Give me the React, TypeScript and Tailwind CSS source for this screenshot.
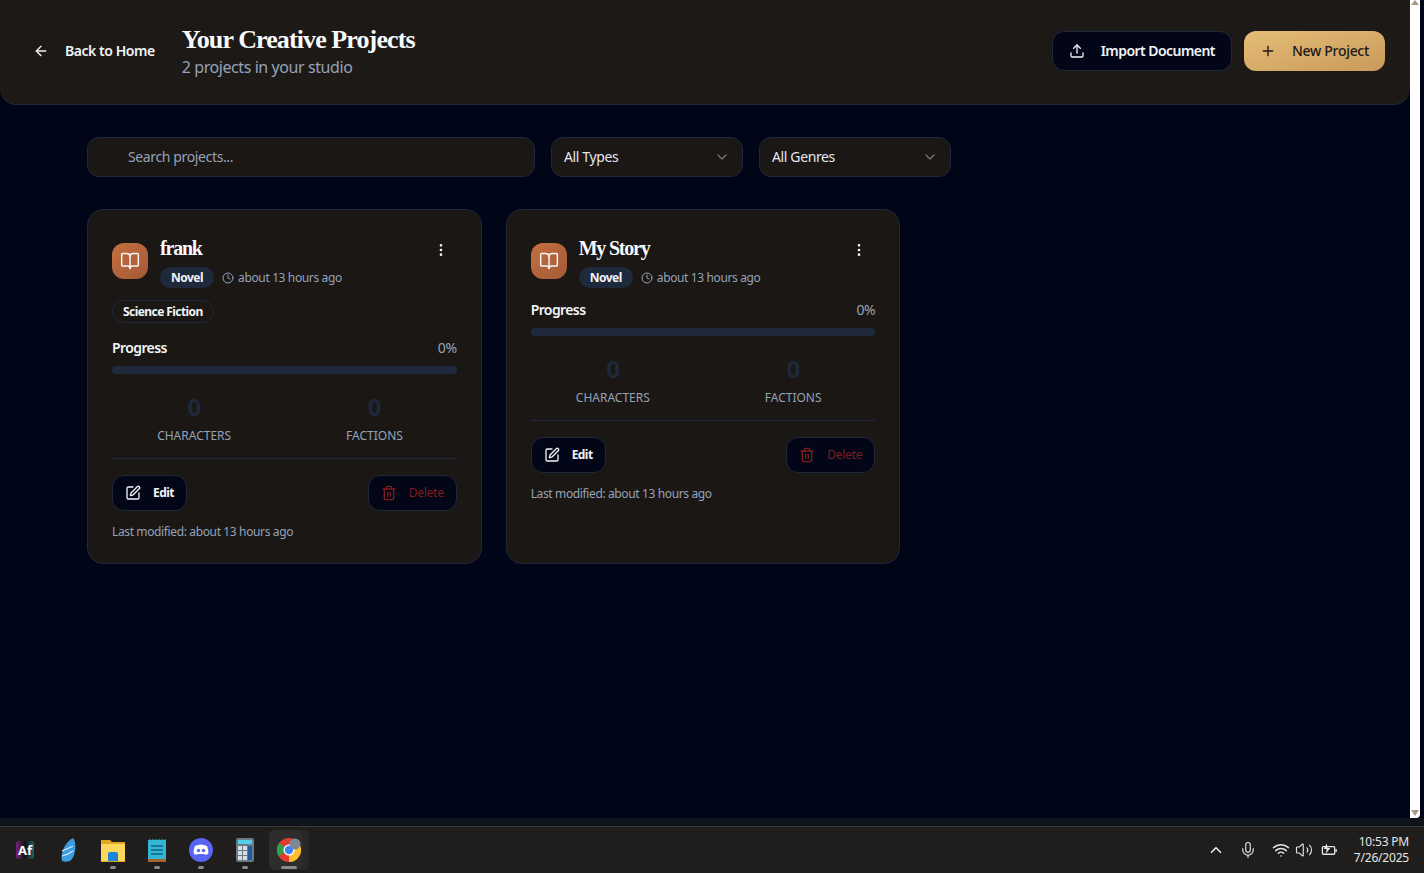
import { ArrowLeft, BookOpen, ChevronDown, ChevronUp, Clock, EllipsisVertical, Mic, Plus, SquarePen, Trash2, Upload, Volume2, Wifi } from "lucide-react";

const sans = "font-['Noto_Sans',sans-serif]";
const serif = "font-['Liberation_Serif',serif]";

const ProjectCard = ({ title, genre }: { title: string; genre?: string }) => (
  <div className="rounded-2xl border border-[#1e293b] bg-[#1b1714] px-6 pt-6 pb-[23px]">
    <div className="flex items-center justify-between">
      <div className="flex items-center gap-3">
        <div className="flex h-9 w-9 items-center justify-center rounded-xl bg-gradient-to-br from-[#c56f3f] to-[#a35a37]">
          <BookOpen className="h-5 w-5 text-[#f5f5f4]" strokeWidth={1.75} />
        </div>
        <div>
          <div className={`${serif} h-7 text-xl leading-7 font-bold tracking-[-1.2px] text-[#f8fafc]`}>{title}</div>
          <div className="mt-[5px] flex items-center gap-2">
            <span className="rounded-full bg-[#1e293b] px-[11px] py-[2px] text-xs leading-[17px] font-bold tracking-[-0.5px] text-[#f1f5f9]">Novel</span>
            <span className="flex items-center gap-1 text-xs text-[#94a3b8]">
              <Clock className="h-3 w-3" />
              about 13 hours ago
            </span>
          </div>
        </div>
      </div>
      <EllipsisVertical className="mr-2 mb-[22px] h-4 w-4 text-[#f1f5f9]" />
    </div>
    {genre && (
      <div className="mt-3 flex pb-[3px]">
        <span className="rounded-full border border-[#1e293b] px-[10px] py-[2px] text-xs leading-[17px] font-bold tracking-[-0.57px] text-[#f1f5f9]">{genre}</span>
      </div>
    )}
    <div className="mt-3 flex items-center justify-between text-sm leading-5">
      <span className="font-semibold tracking-[-0.6px] text-[#f1f5f9]">Progress</span>
      <span className="text-[#94a3b8]">0%</span>
    </div>
    <div className="mt-2 h-2 rounded-full bg-[#1e293b]" />
    <div className="mt-[17px] grid grid-cols-2 gap-4 border-b border-[#1e293b] pb-[14px] text-center">
      {["CHARACTERS", "FACTIONS"].map((label) => (
        <div key={label}>
          <div className="text-2xl leading-8 font-bold text-[#1e293b]">0</div>
          <div className="mt-[5px] text-xs leading-4 tracking-normal text-[#94a3b8]">{label}</div>
        </div>
      ))}
    </div>
    <div className="mt-4 flex justify-between">
      <button className="flex h-9 items-center gap-3 rounded-xl border border-[#1e293b] bg-[#020617] px-3 text-xs font-bold tracking-[-0.55px] text-[#f1f5f9]">
        <SquarePen className="h-4 w-4" />
        Edit
      </button>
      <button className="flex h-9 items-center gap-3 rounded-xl border border-[#1e293b] bg-[#020617] px-3 text-xs tracking-[-0.25px] text-[#7f1d1d]">
        <Trash2 className="h-4 w-4" />
        Delete
      </button>
    </div>
    <div className="mt-[13px] text-xs leading-4 text-[#94a3b8]">Last modified: about 13 hours ago</div>
  </div>
);

const Select = ({ label }: { label: string }) => (
  <div className="flex h-10 w-48 items-center justify-between rounded-xl border border-[#1e293b] bg-[#1b1714] px-3 text-sm text-[#e2e8f0]">
    {label}
    <ChevronDown className="h-4 w-4 text-[#78716c]" />
  </div>
);

const TaskIcon = ({ children, open, wide }: { children: React.ReactNode; open?: boolean; wide?: boolean }) => (
  <div className={`flex h-10 flex-col items-center pt-2 ${wide ? "ml-[2px] w-10 rounded-md bg-[#2d2d2d] shadow-[inset_-6px_0_0_#272727]" : "w-11"}`}>
    <div className="flex h-6 w-6 items-center justify-center">{children}</div>
    <div className="mt-1 flex h-[3px]">{open && <span className={`h-[3px] rounded-full bg-[#8a8a8a] ${wide ? "w-4" : "w-[6px]"}`} />}</div>
  </div>
);

export default function App() {
  return (
    <div className={`${sans} flex h-screen flex-col overflow-hidden bg-[#000617] tracking-[-0.37px]`}>
      <div className="flex min-h-0 flex-1">
        <main className="min-w-0 flex-1">
          <header className="flex h-[105px] items-center justify-between rounded-b-2xl border-b border-[#1e293b] bg-[#1d1916] pr-[25px] pb-[2px] pl-[33px]">
            <div className="flex items-center gap-[27px]">
              <div className="flex items-center gap-[16px] text-sm font-semibold tracking-[-0.45px] text-[#f1f5f9]">
                <ArrowLeft className="h-4 w-4" />
                Back to Home
              </div>
              <div>
                <h1 className={`${serif} mt-px text-[26px] leading-8 font-bold tracking-[-0.9px] text-[#f8fafc]`}>Your Creative Projects</h1>
                <p className="-mt-px text-base leading-6 tracking-[-0.42px] text-[#94a3b8]">2 projects in your studio</p>
              </div>
            </div>
            <div className="flex items-center gap-3">
              <button className="flex h-10 items-center gap-4 rounded-xl border border-[#1e293b] bg-[#020617] px-4 text-sm font-semibold tracking-[-0.55px] text-[#f1f5f9]">
                <Upload className="h-4 w-4" />
                Import Document
              </button>
              <button className="flex h-10 items-center gap-4 rounded-xl bg-gradient-to-br from-[#e5bd76] to-[#c99a5b] px-4 text-sm font-medium tracking-[-0.3px] text-[#1c1917]">
                <Plus className="h-4 w-4" />
                New Project
              </button>
            </div>
          </header>
          <div className="mt-8 ml-[87px] w-[1232px]">
            <div className="flex gap-4">
              <div className="flex h-10 w-[448px] items-center rounded-xl border border-[#1e293b] bg-[#1b1714] pl-10 text-sm text-[#94a3b8]">Search projects...</div>
              <Select label="All Types" />
              <Select label="All Genres" />
            </div>
            <div className="mt-8 grid grid-cols-3 gap-6">
              <ProjectCard title="frank" genre="Science Fiction" />
              <ProjectCard title="My Story" />
            </div>
          </div>
        </main>
        <div className="mr-1 flex w-[10px] flex-col items-center justify-between rounded-br-sm bg-white pb-[2px]">
          <svg viewBox="0 0 8 5" className="h-[5px] w-2">
            <path d="M4 0 8 5H0z" fill="#a39a86" />
          </svg>
          <svg viewBox="0 0 8 6" className="h-[6px] w-2">
            <path d="M0 0h8L4 6z" fill="#a39a86" />
          </svg>
        </div>
      </div>
      <div className="h-2 bg-[#0f131b]" />
      <footer className="flex h-[47px] items-center justify-between border-t border-[#3a3a3a] bg-[#1f1e1c] pr-[15px] pl-[3px]">
        <div className="flex items-center">
          <TaskIcon>
            <div className="flex h-[18px] w-[18px] items-center justify-center rounded-[3px] bg-gradient-to-r from-[#7a1f7a] via-[#111111] to-[#0e6a75] text-[13px] leading-none font-bold tracking-normal text-white">Af</div>
          </TaskIcon>
          <TaskIcon>
            <svg viewBox="0 0 24 24" className="h-6 w-6">
              <path d="M16 0c4 4 3 19-3 23-3 1-6 1-8 0C3 15 8 4 16 0z" fill="#3d9be0" />
              <path d="M5 13c3-1 7-3 11-5M5 18c4-1 8-3 11-5" stroke="#d5ecfa" strokeWidth="1.2" fill="none" />
            </svg>
          </TaskIcon>
          <TaskIcon open>
            <svg viewBox="0 0 24 24" className="h-6 w-6">
              <path d="M0 2h9l2 2h13v20H0z" fill="#e0a91f" />
              <path d="M0 6h24v17H0z" fill="#fbd75b" />
              <path d="M7 16q0-2 2-2h6q2 0 2 2v7H7z" fill="#1a86d8" />
            </svg>
          </TaskIcon>
          <TaskIcon open>
            <svg viewBox="0 0 24 24" className="h-6 w-6">
              <path d="M3 2h18v22H3z" fill="#33b6d6" />
              <path d="M3 21h18v3H3z" fill="#a5622b" />
              <path d="M5 1v3M8 1v3M11 1v3M14 1v3M17 1v3M20 1v3" stroke="#33b6d6" />
              <path d="M6 8h12M6 12h12M6 16h12" stroke="#12627f" strokeWidth="1.6" />
            </svg>
          </TaskIcon>
          <TaskIcon open>
            <svg viewBox="0 0 24 24" className="h-6 w-6">
              <circle cx="12" cy="12" r="12" fill="#5865f2" />
              <path d="M6 8c4-2 8-2 12 0 1 3 2 6 1 8-2 1-3 1-4 0H9c-1 1-2 1-4 0-1-2 0-5 1-8z" fill="#fff" />
              <circle cx="9.5" cy="12.5" r="1.7" fill="#5865f2" />
              <circle cx="14.5" cy="12.5" r="1.7" fill="#5865f2" />
            </svg>
          </TaskIcon>
          <TaskIcon open>
            <svg viewBox="0 0 24 24" className="h-6 w-6">
              <rect x="3" width="18" height="24" rx="2" fill="#6b7a88" />
              <rect x="5" y="2" width="14" height="4" fill="#4fd0ea" />
              <path d="M5 8h4v4H5zM10 8h4v4h-4zM5 13h4v4H5zM10 13h4v4h-4zM5 18h4v4H5zM10 18h4v4h-4z" fill="#d7dde2" />
              <path d="M15 8h4v14h-4z" fill="#1f5b9c" />
            </svg>
          </TaskIcon>
          <TaskIcon open wide>
            <svg viewBox="0 0 24 24" className="h-6 w-6">
              <circle cx="12" cy="12" r="12" fill="#e33b2e" />
              <path d="M12 12 1.6 18A12 12 0 0 1 2 5z" fill="#2fa04a" />
              <path d="M12 24a12 12 0 0 0 10.4-18H12z" fill="#fbc02d" />
              <circle cx="12" cy="12" r="5.5" fill="#fff" />
              <circle cx="12" cy="12" r="4.2" fill="#3b82f6" />
              <circle cx="18" cy="6" r="5.5" fill="#7d8a96" />
            </svg>
          </TaskIcon>
        </div>
        <div className="flex items-center text-[#e5e5e5]">
          <ChevronUp className="mr-[14px] h-[18px] w-[18px]" strokeWidth={2.25} />
          <Mic className="mr-[15px] h-[18px] w-[18px]" strokeWidth={1.5} />
          <Wifi className="mr-[5px] h-[18px] w-[18px]" />
          <Volume2 className="mr-[8px] h-[18px] w-[18px]" strokeWidth={1.5} />
          <svg viewBox="0 0 18 14" className="mr-[16px] h-[14px] w-[17px]" fill="none" stroke="currentColor" strokeWidth="1.4">
            <rect x="1.5" y="3.5" width="13" height="8" rx="1" />
            <path d="M16 6v3" />
            <path d="M6 0 3 6h3l-1 5 5-6H7z" fill="currentColor" stroke="none" />
          </svg>
          <div className="text-right text-xs leading-[16px] tracking-[-0.2px]">
            <div>10:53 PM</div>
            <div>7/26/2025</div>
          </div>
        </div>
      </footer>
    </div>
  );
}
